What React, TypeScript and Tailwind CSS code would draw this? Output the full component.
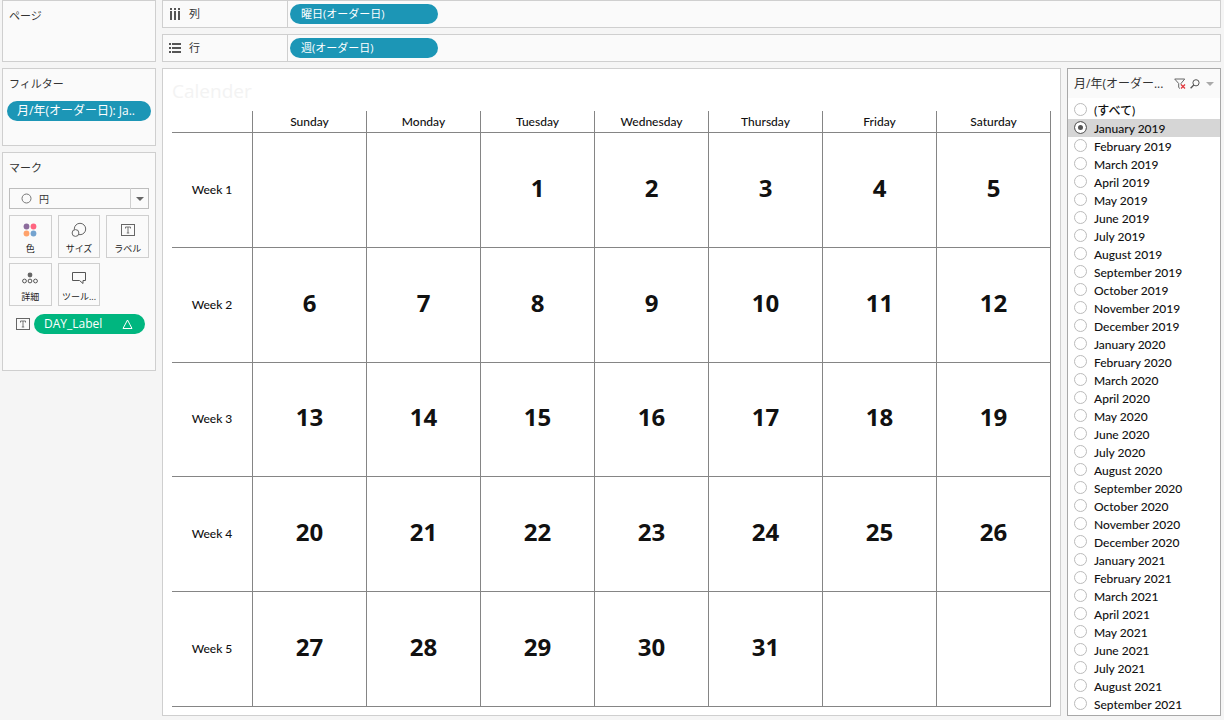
import { useState } from "react";
import type { ReactNode } from "react";
import clsx from "clsx";

const WEEKDAYS = ["Sunday", "Monday", "Tuesday", "Wednesday", "Thursday", "Friday", "Saturday"];

const MONTHS = [
  "January",
  "February",
  "March",
  "April",
  "May",
  "June",
  "July",
  "August",
  "September",
  "October",
  "November",
  "December",
];

// January 2019 through September 2021
const PERIODS = Array.from({ length: 33 }, (_, i) => ({
  year: 2019 + Math.floor(i / 12),
  month: i % 12,
  label: `${MONTHS[i % 12]} ${2019 + Math.floor(i / 12)}`,
}));

const ALL = "(すべて)";

function buildWeeks(year: number, month: number) {
  const offset = new Date(year, month, 1).getDay();
  const days = new Date(year, month + 1, 0).getDate();
  const count = Math.ceil((offset + days) / 7);
  return Array.from({ length: count }, (_, w) =>
    WEEKDAYS.map((_, d) => {
      const day = w * 7 + d - offset + 1;
      return day >= 1 && day <= days ? day : null;
    })
  );
}

function Card({ title, className, children }: { title: string; className: string; children?: ReactNode }) {
  return (
    <section className={clsx("border border-[#cfcfcf] bg-[#fafafa] pt-[7px]", className)}>
      <h2 className="px-1.5 text-[11px] leading-4 text-[#333]">{title}</h2>
      {children}
    </section>
  );
}

function TextIcon() {
  return (
    <svg width="14" height="12" viewBox="0 0 14 12" fill="none" stroke="#666" className="shrink-0">
      <rect x="0.5" y="0.5" width="13" height="11" />
      <path d="M4.5 4.5v-1.5h5v1.5M7 3v6M5.8 9h2.4" strokeWidth="0.9" />
    </svg>
  );
}

function ColorIcon() {
  return (
    <svg width="14" height="14" viewBox="0 0 14 14">
      <circle cx="3.5" cy="3.5" r="2.9" fill="#8c6c9c" />
      <circle cx="10.5" cy="3.5" r="2.9" fill="#ff6580" />
      <circle cx="3.5" cy="10.5" r="2.9" fill="#ffa26b" />
      <circle cx="10.5" cy="10.5" r="2.9" fill="#74a3cf" />
    </svg>
  );
}

function SizeIcon() {
  return (
    <svg width="16" height="16" viewBox="0 0 16 16" fill="none" stroke="#666">
      <circle cx="9" cy="7" r="5.7" />
      <circle cx="4.5" cy="11" r="3.4" fill="#fafafa" />
    </svg>
  );
}

function DetailIcon() {
  return (
    <svg width="16" height="14" viewBox="0 0 16 14" fill="none" stroke="#555">
      <circle cx="8" cy="4" r="2.4" fill="#666" stroke="none" />
      <circle cx="2.5" cy="10" r="1.9" />
      <circle cx="8" cy="10" r="1.9" />
      <circle cx="13.5" cy="10" r="1.9" />
    </svg>
  );
}

function TooltipIcon() {
  return (
    <svg width="14" height="14" viewBox="0 0 14 14" fill="none" stroke="#555">
      <path d="M0.5 1.5h13v8h-2.5v3l-3.5-3h-7z" />
    </svg>
  );
}

function MarkButton({ icon, label }: { icon: ReactNode; label: string }) {
  return (
    <button type="button" className="flex h-[43px] flex-col items-center justify-between border border-[#cfcfcf] pt-1.5">
      <span className="flex h-4 items-center">{icon}</span>
      <span className="text-[9px] leading-4 text-[#222]">{label}</span>
    </button>
  );
}

function Pill({ className, children }: { className: string; children: ReactNode }) {
  return (
    <button type="button" className={clsx("flex h-5 items-center rounded-full text-left text-white", className)}>
      {children}
    </button>
  );
}

function Shelf({ icon, label, field }: { icon: ReactNode; label: string; field: string }) {
  return (
    <div className="flex h-7 border border-[#cfcfcf] bg-[#fafafa]">
      <div className="flex w-[125px] shrink-0 items-center gap-2 border-r border-[#cfcfcf] pl-1.5">
        {icon}
        <span className="text-[11px] text-[#333]">{label}</span>
      </div>
      <div className="flex flex-1 items-center pl-0.5">
        <Pill className="w-[148px] bg-[#1c96b6] px-[11px] text-[11px]">{field}</Pill>
      </div>
    </div>
  );
}

function ColumnsIcon() {
  return (
    <svg width="12" height="12" viewBox="0 0 12 12" fill="#555">
      {[0, 4, 8].map((x) => (
        <g key={x}>
          <rect x={x + 1} width="2" height="2" />
          <rect x={x + 1} y="3" width="2" height="9" />
        </g>
      ))}
    </svg>
  );
}

function RowsIcon() {
  return (
    <svg width="12" height="10" viewBox="0 0 12 10" fill="#555">
      {[0, 4, 8].map((y) => (
        <g key={y}>
          <rect y={y} width="2" height="2" />
          <rect x="3" y={y} width="9" height="2" />
        </g>
      ))}
    </svg>
  );
}

function Sidebar() {
  return (
    <aside className="flex w-[154px] shrink-0 flex-col gap-1.5">
      <Card title="ページ" className="h-[62px]" />
      <Card title="フィルター" className="h-[78px]">
        <Pill className="mx-1 mt-[9px] w-36 bg-[#1c96b6] px-[10px] text-[12px]">月/年(オーダー日): Ja..</Pill>
      </Card>
      <Card title="マーク" className="h-[219px]">
        <div className="px-1.5 pt-3">
          <div className="relative">
            <select
              aria-label="マークの種類"
              className="block h-[21px] w-full appearance-none border border-[#bdbdbd] bg-[#fafafa] pl-[29px] text-[10px] leading-4 text-[#333]"
            >
              <option>円</option>
            </select>
            <svg className="pointer-events-none absolute top-[5px] left-3" width="11" height="11" viewBox="0 0 11 11">
              <circle cx="5.5" cy="5.5" r="4.5" fill="none" stroke="#777" />
            </svg>
            <span className="pointer-events-none absolute inset-y-0 right-0 flex w-[19px] items-center justify-center border-l border-[#cfcfcf]">
              <svg width="8" height="4" viewBox="0 0 8 4" fill="#666">
                <path d="M0 0h8L4 4z" />
              </svg>
            </span>
          </div>
          <div className="mt-1.5 grid grid-cols-3 gap-x-1.5 gap-y-[5px]">
            <MarkButton icon={<ColorIcon />} label="色" />
            <MarkButton icon={<SizeIcon />} label="サイズ" />
            <MarkButton icon={<TextIcon />} label="ラベル" />
            <MarkButton icon={<DetailIcon />} label="詳細" />
            <MarkButton icon={<TooltipIcon />} label="ツール..." />
          </div>
          <div className="mt-2 flex items-center gap-1 pl-[7px]">
            <TextIcon />
            <Pill className="w-[111px] justify-between bg-[#00b67f] pr-3 pl-2.5 text-[12px]">
              DAY_Label
              <svg width="11" height="10" viewBox="0 0 11 10" fill="none" stroke="#fff">
                <path d="M5.5 1 10 9.5H1z" />
              </svg>
            </Pill>
          </div>
        </div>
      </Card>
    </aside>
  );
}

function Calendar({ weeks }: { weeks: (number | null)[][] }) {
  return (
    <main className="min-w-0 flex-1 border border-[#cfcfcf] bg-white px-[9px] pb-2">
      <h1 className="h-[42px] pt-2 text-[19px] leading-7 text-[#f3f3f3]">Calender</h1>
      <table className="h-[596px] w-full table-fixed border-separate border-spacing-0 font-['Lato','Noto_Sans_CJK_JP',sans-serif] text-[12px] font-medium text-[#111]">
        <thead>
          <tr className="h-[22px]">
            <td className="w-[81px] border-r border-b border-[#858585]" />
            {WEEKDAYS.map((day) => (
              <th key={day} scope="col" className="border-r border-b border-[#858585] p-0 leading-4 font-medium">
                {day}
              </th>
            ))}
          </tr>
        </thead>
        <tbody>
          {weeks.map((week, i) => (
            <tr key={i}>
              <th scope="row" className="border-r border-b border-[#858585] p-0 font-medium">
                Week {i + 1}
              </th>
              {week.map((day, d) => (
                <td
                  key={d}
                  className="border-r border-b border-[#858585] p-0 pb-1 text-center font-['Open_Sans',sans-serif] text-[24px] leading-8 font-bold"
                >
                  {day}
                </td>
              ))}
            </tr>
          ))}
        </tbody>
      </table>
    </main>
  );
}

function MonthFilter({ value, onChange }: { value: string; onChange: (label: string) => void }) {
  return (
    <fieldset className="w-[154px] shrink-0 border border-[#a8a8a8] bg-white pb-0.5">
      <div className="mb-[3px] flex h-[29px] items-center bg-[#fafafa] pr-1.5 pl-1.5">
        <h2 className="flex-1 text-[12px] text-[#333]">月/年(オーダー...</h2>
        <button type="button" aria-label="フィルターのクリア">
          <svg width="12" height="12" viewBox="0 0 12 12" fill="none">
            <path d="M0.7 1h10L7 5.5v1M0.7 1l4 4.5V9.5L6 10.5" stroke="#666" />
            <path d="M7 6.5l4 4M11 6.5l-4 4" stroke="#e0393e" strokeWidth="1.3" />
          </svg>
        </button>
        <button type="button" aria-label="検索" className="ml-1">
          <svg width="10" height="10" viewBox="0 0 10 10" fill="none" stroke="#555">
            <circle cx="6" cy="3.8" r="3.1" />
            <path d="M3.8 6 0.6 9.3" strokeWidth="1.3" />
          </svg>
        </button>
        <button type="button" aria-label="メニュー" className="ml-1.5">
          <svg width="8" height="4" viewBox="0 0 8 4" fill="#aaa">
            <path d="M0 0h8L4 4z" />
          </svg>
        </button>
      </div>
      {[ALL, ...PERIODS.map((p) => p.label)].map((label) => (
        <label
          key={label}
          className="flex h-[18px] items-start gap-[7px] pt-0.5 pl-1.5 font-['Lato','Noto_Sans_CJK_JP',sans-serif] text-[12px] leading-4 font-medium text-[#111] has-checked:bg-[#d6d6d6]"
        >
          <input
            type="radio"
            name="period"
            checked={value === label}
            onChange={() => onChange(label)}
            className="size-[13px] shrink-0 appearance-none rounded-full border border-[#bbb] bg-white checked:border-[#666] checked:bg-[#555] checked:shadow-[inset_0_0_0_3px_#fff]"
          />
          {label}
        </label>
      ))}
    </fieldset>
  );
}

export default function App() {
  const [selected, setSelected] = useState("January 2019");
  const period = PERIODS.find((p) => p.label === selected) ?? PERIODS[0];

  return (
    <div className="flex min-h-screen items-start gap-1.5 bg-[#f5f5f5] pr-[3px] pb-1 pl-0.5 font-['Open_Sans','Noto_Sans_CJK_JP',sans-serif]">
      <Sidebar />
      <div className="flex min-w-0 flex-1 flex-col gap-1.5">
        <Shelf icon={<ColumnsIcon />} label="列" field="曜日(オーダー日)" />
        <Shelf icon={<RowsIcon />} label="行" field="週(オーダー日)" />
        <div className="flex items-stretch gap-1.5">
          <Calendar weeks={buildWeeks(period.year, period.month)} />
          <MonthFilter value={selected} onChange={setSelected} />
        </div>
      </div>
    </div>
  );
}
